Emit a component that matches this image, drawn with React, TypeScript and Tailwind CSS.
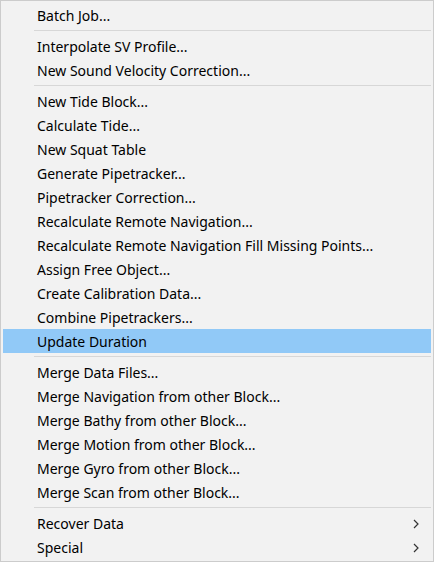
import React from 'react';

type Entry = { label: string; sub?: boolean; active?: boolean } | 'sep';

const items: Entry[] = [
  { label: 'Batch Job...' },
  'sep',
  { label: 'Interpolate SV Profile...' },
  { label: 'New Sound Velocity Correction...' },
  'sep',
  { label: 'New Tide Block...' },
  { label: 'Calculate Tide...' },
  { label: 'New Squat Table' },
  { label: 'Generate Pipetracker...' },
  { label: 'Pipetracker Correction...' },
  { label: 'Recalculate Remote Navigation...' },
  { label: 'Recalculate Remote Navigation Fill Missing Points...' },
  { label: 'Assign Free Object...' },
  { label: 'Create Calibration Data...' },
  { label: 'Combine Pipetrackers...' },
  { label: 'Update Duration', active: true },
  'sep',
  { label: 'Merge Data Files...' },
  { label: 'Merge Navigation from other Block...' },
  { label: 'Merge Bathy from other Block...' },
  { label: 'Merge Motion from other Block...' },
  { label: 'Merge Gyro from other Block...' },
  { label: 'Merge Scan from other Block...' },
  'sep',
  { label: 'Recover Data', sub: true },
  { label: 'Special', sub: true },
];

export default function App() {
  return (
    <div className="w-[434px] h-[562px] bg-[#f2f2f2] border border-[#cccccc] p-[2px] font-['Noto_Sans',sans-serif] text-[14px] text-black">
      {items.map((it, i) =>
        it === 'sep' ? (
          <div key={i} className="h-[7px] flex items-center pl-[31px]">
            <div className="h-px w-full bg-[#d7d7d7]" />
          </div>
        ) : (
          <div
            key={i}
            className={`h-[24px] flex items-center pl-[34px] pr-[12px] pt-px ${it.active ? 'bg-[#91c9f7]' : ''}`}
          >
            <span className="flex-1 leading-none">{it.label}</span>
            {it.sub && (
              <svg width="6" height="10" viewBox="0 0 6 10">
                <path d="M1 1 L5 5 L1 9" fill="none" stroke="#333" strokeWidth="1.2" />
              </svg>
            )}
          </div>
        )
      )}
    </div>
  );
}
